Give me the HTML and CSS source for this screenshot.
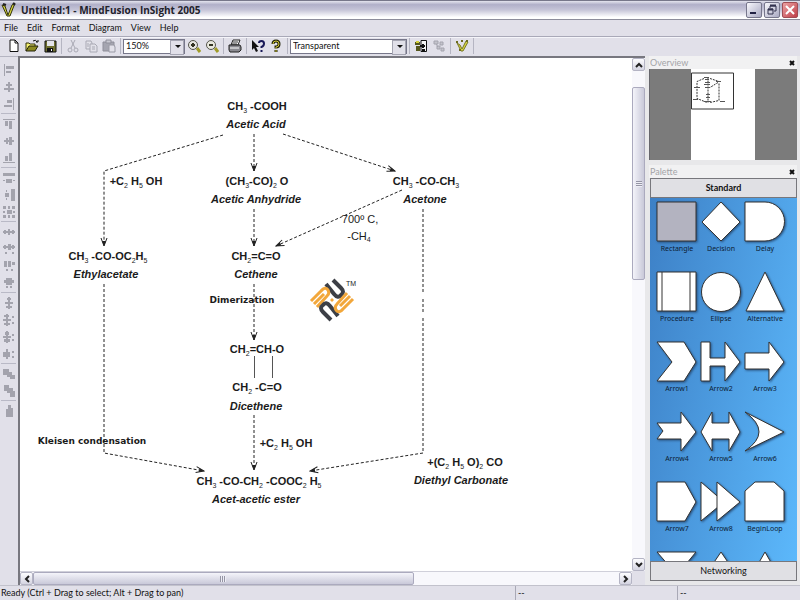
FILE: index.html
```html
<!DOCTYPE html>
<html lang="en">
<head>
<meta charset="utf-8">
<title>Untitled:1 - MindFusion InSight 2005</title>
<link rel="stylesheet" href="styles.css">
</head>
<body>
<header class="titlebar">
  <svg class="app-icon" viewBox="0 0 16 16" width="16" height="16" aria-hidden="true"><path d="M1 3l3 1 3 9 4-10 3-2-5 13H6z" fill="#d8d63c" stroke="#33330c"/><path d="M2 2l3 1" stroke="#222" stroke-width="2"/><path d="M12 1l2 2" stroke="#222" stroke-width="2"/></svg>
  <h1 class="title">Untitled:1 - MindFusion InSight 2005</h1>
  <button class="win-btn" aria-label="Minimize"><svg viewBox="0 0 14 14" width="14" height="14"><path d="M3 10h6" stroke="#222244" stroke-width="2"/></svg></button>
  <button class="win-btn" aria-label="Restore"><svg viewBox="0 0 14 14" width="14" height="14" fill="none" stroke="#33334f"><path d="M5 5V3h6v5H9"/><path d="M5 2.500h6M3 6.500h5" stroke-width="2"/><path d="M3 6h5v5H3z"/></svg></button>
  <button class="win-btn close" aria-label="Close"><svg viewBox="0 0 14 14" width="14" height="14"><path d="M3 3l8 8M11 3l-8 8" stroke="#fff" stroke-width="2"/></svg></button>
</header>
<nav class="menubar">
  <button>File</button><button>Edit</button><button>Format</button><button>Diagram</button><button>View</button><button>Help</button>
</nav>
<div class="toolbar">
  <button aria-label="New"><svg viewBox="0 0 14 14"><path d="M3 1h5l3 3v8.500H3z" fill="#fff" stroke="#111"/><path d="M8 1v3h3" fill="none" stroke="#111"/></svg></button>
  <button aria-label="Open"><svg viewBox="0 0 14 14"><path d="M1 12V4h3l1 1h5v2" fill="#f3ef70" stroke="#33330c"/><path d="M1 12l3-5h9l-3 5z" fill="#8c8a20" stroke="#22220a"/><path d="M8 2q3-2 4 1m1-2v2h-2" fill="none" stroke="#111"/></svg></button>
  <button aria-label="Save"><svg viewBox="0 0 14 14"><path d="M2 2h11v11H2z" fill="#6f7030" stroke="#111"/><path d="M4 2h7v5H4z" fill="#e4e4ea"/><path d="M4 9h6v4H4z" fill="#111"/><path d="M8 10h1v2H8z" fill="#fff"/></svg></button>
  <i class="sep"></i>
  <button aria-label="Cut" disabled><svg viewBox="0 0 14 14" fill="none" stroke="#a9a9b4"><path d="M5 1l4 8M9 1L5 9"/><circle cx="4" cy="11" r="2"/><circle cx="10" cy="11" r="2"/></svg></button>
  <button aria-label="Copy" disabled><svg viewBox="0 0 14 14" fill="#e2e1e9" stroke="#a9a9b4"><path d="M2 2h5l1 2v6H2z"/><path d="M6 5h5l2 2v6H6zM8 8h3M8 10h3M3 5h2M3 7h2"/></svg></button>
  <button aria-label="Paste" disabled><svg viewBox="0 0 14 14"><path d="M1 3h11v9H1z" fill="#a5a5b0" stroke="#8f8f9a"/><path d="M4 1h5v3H4z" fill="#c9c9d2" stroke="#8f8f9a"/><path d="M7 6h5l1 2v5H7z" fill="#e2e1e9" stroke="#9a9aa5"/></svg></button>
  <i class="sep"></i>
  <span class="combo zoom"><select aria-label="Zoom"><option>150%</option></select></span>
  <button aria-label="Zoom in"><svg viewBox="0 0 14 14"><path d="M10 9l3 4" stroke="#a09c28" stroke-width="3"/><circle cx="6" cy="6" r="4.500" fill="#e6e6e0" stroke="#55554c"/><path d="M4 6h4M6 4v4" stroke="#333322" stroke-width="2"/></svg></button>
  <button aria-label="Zoom out"><svg viewBox="0 0 14 14"><path d="M10 9l3 4" stroke="#a09c28" stroke-width="3"/><circle cx="6" cy="6" r="4.500" fill="#e9e9df" stroke="#55554c"/><path d="M4 6h4" stroke="#333322" stroke-width="2"/></svg></button>
  <i class="sep"></i>
  <button aria-label="Print"><svg viewBox="0 0 14 14"><path d="M5 1h7l-2 5H3z" fill="#fff" stroke="#222"/><path d="M5 3h5M4 5h5" stroke="#333"/><path d="M1 6h11l1 2v3l-2 2H2l-1-2z" fill="#8a8a90" stroke="#222"/><path d="M2 9h9" stroke="#fff"/></svg></button>
  <i class="sep"></i>
  <button aria-label="Context help"><svg viewBox="0 0 14 14"><path d="M1 1v10l2-2 2 4 2-1-2-4h3z" fill="#111"/><path d="M8 4q0-2 2.500-2T13 4.500 10.500 8v1M10.500 11v2" fill="none" stroke="#191958" stroke-width="2"/></svg></button>
  <button aria-label="Help"><svg viewBox="0 0 14 14"><path d="M4 5q0-3 3-3t3 3-3 3v1.500M7 11v2" fill="none" stroke="#222208" stroke-width="3"/><path d="M4 5q0-3 3-3t3 3-3 3v1.500M7 11v2" fill="none" stroke="#cfc73a" stroke-width="1"/></svg></button>
  <i class="sep"></i>
  <span class="combo style"><select aria-label="Style"><option>Transparent</option></select></span>
  <i class="sep"></i>
  <button aria-label="Insert node"><svg viewBox="0 0 14 14"><path d="M7 1.500h5.500v11H7z" fill="#f4f4f4" stroke="#111"/><path d="M1 3h5v3H1zM2 7h4v5H2z" fill="#55561c"/><path d="M2 2h3v2H2z" fill="#d3cf3a"/><path d="M6 7h5M9 5v4M8 11h3" stroke="#111" stroke-width="2"/></svg></button>
  <button aria-label="Connect" disabled><svg viewBox="0 0 14 14" fill="#c4c4cc" stroke="#a4a4ae"><path d="M2 2h4v3H2zM8 3h3v3H8zM5 7h3v3H5zM9 9h3v3H9zM4 5l2 3"/></svg></button>
  <i class="sep"></i>
  <button aria-label="About"><svg viewBox="0 0 14 14"><path d="M2 4l3 2 2 4 4-8 2 1-5 9H6z" fill="#d8d540" stroke="#77772a"/><path d="M1 3h2M6 2h2M11 2h2M4 11h2" stroke="#6c6c20" stroke-width="2"/></svg></button>
  <i class="sep"></i>
</div>
<main class="workspace">
  <aside class="align-bar">
    <button aria-label="Align left"><svg viewBox="0 0 12 12"><path d="M1 0h1v12H1zM3 2h8v3H3zM3 7h5v2H3z"/></svg></button>
    <button aria-label="Align center"><svg viewBox="0 0 12 12"><path d="M5 1h2v10H5zM3 3h6v2H3zM1 7h10v2H1z"/></svg></button>
    <button aria-label="Align right"><svg viewBox="0 0 12 12"><path d="M10 0h1v12h-1zM4 2h5v3H4zM1 7h8v2H1z"/></svg></button>
    <i class="rule"></i>
    <button aria-label="Align top"><svg viewBox="0 0 12 12"><path d="M0 1h12v1H0zM2 3h3v5H2zM6 3h3v8H6z"/></svg></button>
    <button aria-label="Align middle"><svg viewBox="0 0 12 12"><path d="M1 5h10v2H1zM3 3h2v6H3zM6 2h3v8H6z"/></svg></button>
    <button aria-label="Align bottom"><svg viewBox="0 0 12 12"><path d="M0 10h12v1H0zM2 4h3v5H2zM6 1h3v8H6z"/></svg></button>
    <i class="rule"></i>
    <button aria-label="Same width"><svg viewBox="0 0 12 12"><path d="M0 1h12v3H0zM0 8h2v1H0zM3 7h6v4H3zM10 8h2v1h-2z"/></svg></button>
    <button aria-label="Same height"><svg viewBox="0 0 12 12"><path d="M8 0h4v12H8zM2 4h4v4H2zM3 1h1v2H3zM3 9h1v2H3z"/></svg></button>
    <button aria-label="Same size"><svg viewBox="0 0 12 12"><path d="M0 0h3v3H0zM5 0h2v3H5zM9 0h3v3H9zM4 4h5v4H4zM0 5h2v2H0zM10 5h2v2h-2zM0 9h3v3H0zM5 9h2v3H5zM9 9h3v3H9z"/></svg></button>
    <i class="rule"></i>
    <button aria-label="Space across"><svg viewBox="0 0 12 12"><path d="M0 5h12v2H0zM1 4h2v4H1zM5 3h2v6H5zM9 4h2v4H9z"/></svg></button>
    <button aria-label="Increase across"><svg viewBox="0 0 12 12"><path d="M0 3h12v2H0zM1 2h2v4H1zM5 1h3v6H5zM9 2h2v4H9zM2 9h2v2H2zM9 9h2v2H9z"/></svg></button>
    <button aria-label="Decrease across"><svg viewBox="0 0 12 12"><path d="M1 1h3v6H1zM5 1h3v6H5zM9 2h3v3H9zM3 9h2v2H3zM8 9h2v2H8z"/></svg></button>
    <button aria-label="Remove across"><svg viewBox="0 0 12 12"><path d="M1 3h10v3H1zM3 1h6v7H3zM3 9h2v2H3zM7 9h2v2H7z"/></svg></button>
    <i class="rule"></i>
    <button aria-label="Space down"><svg viewBox="0 0 12 12"><path d="M5 0h2v12H5zM4 1h4v2H4zM2 5h8v2H2zM3 9h6v2H3z"/></svg></button>
    <button aria-label="Increase down"><svg viewBox="0 0 12 12"><path d="M3 0h2v12H3zM1 1h5v2H1zM0 5h8v2H0zM1 9h6v2H1zM9 2h2v2H9zM9 8h2v2H9z"/></svg></button>
    <button aria-label="Decrease down"><svg viewBox="0 0 12 12"><path d="M3 0h2v12H3zM2 1h4v3H2zM0 5h8v2H0zM1 8h6v3H1zM9 3h2v2H9zM9 8h2v2H9z"/></svg></button>
    <button aria-label="Remove down"><svg viewBox="0 0 12 12"><path d="M3 1h2v10H3zM0 4h7v5H0zM9 3h2v2H9zM9 8h2v2H9z"/></svg></button>
    <i class="rule"></i>
    <button aria-label="Bring to front"><svg viewBox="0 0 12 12"><path d="M0 1h6v6H0zM4 4h5v5H4zM7 7h5v4H7z"/></svg></button>
    <button aria-label="Send to back"><svg viewBox="0 0 12 12"><path d="M1 0h5v6H1zM4 3h6v5H4zM7 6h5v6H7z"/></svg></button>
    <i class="rule"></i>
    <button aria-label="Lock"><svg viewBox="0 0 12 12"><path d="M5 0h3v3h2v9H3V4h2z"/></svg></button>
  </aside>
  <section class="document">
    <div class="canvas">
      <svg class="diagram" viewBox="20 58 612 513" width="612" height="513">
        <defs>
          <marker id="tip" viewBox="0 0 10 8" refX="9" refY="4" markerWidth="10" markerHeight="8" markerUnits="userSpaceOnUse" orient="auto"><path d="M1 1l8 3-8 3" fill="none" stroke="#222"/><path d="M4 2l5 2-5 2z" fill="#222"/></marker>
        </defs>
        <g class="links">
          <path d="M223 135L104 171V246"/>
          <path d="M254 134V171"/>
          <path d="M283 134L395 171"/>
          <path d="M402 190L276 246"/>
          <path d="M254 209V246"/>
          <path d="M254 284V340"/>
          <path d="M254 415V470"/>
          <path d="M104 284V453L204 471"/>
          <path d="M423 209V294M423 299V314M423 318V453L310 471"/>
        </g>
        <path class="bond" d="M254 356V378M272 356V378"/>
        <g class="formula">
          <text x="257" y="110">CH<tspan class="sub" dy="3">3</tspan><tspan dy="-3"> -COOH</tspan></text>
          <text x="257" y="185">(CH<tspan class="sub" dy="3">3</tspan><tspan dy="-3">-CO)</tspan><tspan class="sub" dy="3">2</tspan><tspan dy="-3"> O</tspan></text>
          <text x="426" y="185">CH<tspan class="sub" dy="3">3</tspan><tspan dy="-3"> -CO-CH</tspan><tspan class="sub" dy="3">3</tspan></text>
          <text x="136" y="185">+C<tspan class="sub" dy="3">2</tspan><tspan dy="-3"> H</tspan><tspan class="sub" dy="3">5</tspan><tspan dy="-3"> OH</tspan></text>
          <text x="108" y="260">CH<tspan class="sub" dy="3">3</tspan><tspan dy="-3"> -CO-OC</tspan><tspan class="sub" dy="3">2</tspan><tspan dy="-3">H</tspan><tspan class="sub" dy="3">5</tspan></text>
          <text x="256" y="260">CH<tspan class="sub" dy="3">2</tspan><tspan dy="-3">=C=O</tspan></text>
          <text x="257" y="353">CH<tspan class="sub" dy="3">2</tspan><tspan dy="-3">=CH-O</tspan></text>
          <text x="257" y="391">CH<tspan class="sub" dy="3">2</tspan><tspan dy="-3"> -C=O</tspan></text>
          <text x="286" y="447">+C<tspan class="sub" dy="3">2</tspan><tspan dy="-3"> H</tspan><tspan class="sub" dy="3">5</tspan><tspan dy="-3"> OH</tspan></text>
          <text x="259" y="485">CH<tspan class="sub" dy="3">3</tspan><tspan dy="-3"> -CO-CH</tspan><tspan class="sub" dy="3">2</tspan><tspan dy="-3"> -COOC</tspan><tspan class="sub" dy="3">2</tspan><tspan dy="-3"> H</tspan><tspan class="sub" dy="3">5</tspan></text>
          <text x="465" y="466">+(C<tspan class="sub" dy="3">2</tspan><tspan dy="-3"> H</tspan><tspan class="sub" dy="3">5</tspan><tspan dy="-3"> O)</tspan><tspan class="sub" dy="3">2</tspan><tspan dy="-3"> CO</tspan></text>
        </g>
        <g class="name">
          <text x="256" y="128">Acetic Acid</text>
          <text x="256" y="203">Acetic Anhydride</text>
          <text x="425" y="203">Acetone</text>
          <text x="106" y="278">Ethylacetate</text>
          <text x="256" y="278">Cethene</text>
          <text x="256" y="410">Dicethene</text>
          <text x="256" y="503">Acet-acetic ester</text>
          <text x="461" y="484">Diethyl Carbonate</text>
        </g>
        <g class="note">
          <text x="242" y="303">Dimerization</text>
          <text x="92" y="444">Kleisen condensation</text>
        </g>
        <g class="cond">
          <text x="360" y="223">700º C,</text>
          <text x="359" y="240">-CH<tspan class="sub" dy="2">4</tspan></text>
        </g>
        <g fill="none">
          <g id="half">
            <path d="M326 284L334 294Q338 299 341 295Q345 292 341 288L333 280" stroke="#3c3f46" stroke-width="4"/>
            <path d="M311 301L321 291Q325 286 328 290Q330 293 327 296L317 307M314 304L324 294" stroke="#f2a73b" stroke-width="3"/>
          </g>
          <use href="#half" transform="rotate(180 332 300)"/>
          <path d="M332 298l2 2-2 2-2-2z" fill="#f2a73b"/>
        </g>
        <text class="tm" x="346" y="286">TM</text>
      </svg>
    </div>
    <div class="vscroll">
      <button class="arrow" aria-label="Scroll up"><svg viewBox="0 0 8 8"><path d="M1 6l3-3 3 3"/></svg></button>
      <div class="track"><div class="thumb"></div></div>
      <button class="arrow" aria-label="Scroll down"><svg viewBox="0 0 8 8"><path d="M1 2l3 3 3-3"/></svg></button>
    </div>
    <div class="hscroll">
      <button class="arrow" aria-label="Scroll left"><svg viewBox="0 0 8 8"><path d="M6 1L3 4l3 3"/></svg></button>
      <div class="track"><div class="thumb"></div></div>
      <button class="arrow" aria-label="Scroll right"><svg viewBox="0 0 8 8"><path d="M2 1l3 3-3 3"/></svg></button>
    </div>
  </section>
  <aside class="panels">
    <section class="overview">
      <header class="panel-head"><h2>Overview</h2><button aria-label="Close overview"><svg viewBox="0 0 6 6"><path d="M1 1l4 4M5 1L1 5"/></svg></button></header>
      <div class="map">
        <svg class="page" viewBox="0 0 64 90" width="64" height="90">
          <path d="M0.500 3.500h42v36h-42z" fill="none" stroke="#333"/>
          <g fill="none" stroke="#333" stroke-dasharray="2 1"><path d="M13 9L6 12v17l10 4M19 9l9 3M17 8v25M28 14v17l-9 2M27 13l-8 5"/></g>
          <path d="M13 8h5M14 10h4M14 13h5M13 15h6M3 18h6M14 18h5M15 25h4M15 28h4M25 12h5M13 32h7M2 30h5M29 32h5" stroke="#555"/>
        </svg>
      </div>
    </section>
    <section class="palette">
      <header class="panel-head"><h2>Palette</h2><button aria-label="Close palette"><svg viewBox="0 0 6 6"><path d="M1 1l4 4M5 1L1 5"/></svg></button></header>
      <div class="palette-box">
        <button class="group open">Standard</button>
        <div class="shapes">
          <figure><svg viewBox="0 0 42 42"><path class="picked" d="M1 1h39v39H1z"/></svg><figcaption>Rectangle</figcaption></figure>
          <figure><svg viewBox="0 0 42 42"><path d="M21 1l19 20-19 19L2 21z"/></svg><figcaption>Decision</figcaption></figure>
          <figure><svg viewBox="0 0 42 42"><path d="M1 1h20a19 19 0 0 1 0 39H1z"/></svg><figcaption>Delay</figcaption></figure>
          <figure><svg viewBox="0 0 42 42"><path d="M1 1h39v39H1zM6 1v39M34 1v39"/></svg><figcaption>Procedure</figcaption></figure>
          <figure><svg viewBox="0 0 42 42"><circle cx="21" cy="21" r="19.500"/></svg><figcaption>Ellipse</figcaption></figure>
          <figure><svg viewBox="0 0 42 42"><path d="M21 1l19 39H2z"/></svg><figcaption>Alternative</figcaption></figure>
          <figure><svg viewBox="0 0 42 42"><path d="M1 1h27l12 20-12 19H1l15-19z"/></svg><figcaption>Arrow1</figcaption></figure>
          <figure><svg viewBox="0 0 42 42"><path d="M1 1h9v16h15V1l15 20-15 19V25H10v15H1z"/></svg><figcaption>Arrow2</figcaption></figure>
          <figure><svg viewBox="0 0 42 42"><path d="M1 12h24V1l15 20-15 19V28H1z"/></svg><figcaption>Arrow3</figcaption></figure>
          <figure><svg viewBox="0 0 42 42"><path d="M1 12h24V1l15 20-15 19V28H1l6-8z"/></svg><figcaption>Arrow4</figcaption></figure>
          <figure><svg viewBox="0 0 42 42"><path d="M1 21L12 1v11h17V1l11 20-11 19V28H12v12z"/></svg><figcaption>Arrow5</figcaption></figure>
          <figure><svg viewBox="0 0 42 42"><path d="M1 1l39 20L1 40q28-19 0-39z"/></svg><figcaption>Arrow6</figcaption></figure>
          <figure><svg viewBox="0 0 42 42"><path d="M1 1h28l11 20-11 19H1z"/></svg><figcaption>Arrow7</figcaption></figure>
          <figure><svg viewBox="0 0 42 42"><path d="M1 1l23 20L1 40z"/><path d="M17 1l23 20-23 19z"/></svg><figcaption>Arrow8</figcaption></figure>
          <figure><svg viewBox="0 0 42 42"><path d="M11 1h19l10 9v30H1V10z"/></svg><figcaption>BeginLoop</figcaption></figure>
          <figure><svg viewBox="0 0 42 42"><path d="M1 1h39L21 24z"/></svg></figure>
          <figure><svg viewBox="0 0 42 42"><path d="M21 1l19 28H2z"/></svg></figure>
          <figure><svg viewBox="0 0 42 42"><path d="M21 1l16 28H5z"/></svg></figure>
        </div>
        <button class="group">Networking</button>
      </div>
    </section>
  </aside>
</main>
<footer class="status">
  <span>Ready (Ctrl + Drag to select; Alt + Drag to pan)</span><span>--</span><span>--</span>
</footer>
</body>
</html>
```
FILE: styles.css
```css
* { box-sizing: border-box; }
body {
  margin: 0;
  height: 100vh;
  display: flex;
  flex-direction: column;
  overflow: hidden;
  background: #e1e0e9;
  color: #111;
  font: 9px/12px Lato, sans-serif;
}
button {
  display: flex;
  align-items: center;
  justify-content: center;
  padding: 0;
  border: 0;
  background: none;
  color: inherit;
  font: inherit;
}
h1, h2, figure { margin: 0; }

.titlebar {
  display: flex;
  align-items: center;
  gap: 2px;
  height: 20px;
  padding: 0 2px 0 1px;
  border-top: 1px solid #77778a;
  border-bottom: 1px solid #8d8d9c;
  background: linear-gradient(#e4e4ee, #b1b0c9 20%, #c6c5d8 50%, #ffffff 90%);
}
.title {
  flex: 1;
  padding-left: 2px;
  font: bold 10px/16px "Open Sans", sans-serif;
  color: #22222c;
}
.win-btn {
  width: 16px;
  height: 16px;
  border: 1px solid #77778c;
  border-radius: 2px;
  background: linear-gradient(135deg, #f7f7fc, #a9a9c2);
}
.win-btn.close {
  border-color: #a04c54;
  background: linear-gradient(135deg, #eba0a2, #bf3f49);
}

.menubar {
  display: flex;
  gap: 9px;
  height: 17px;
  padding-left: 4px;
  border-bottom: 1px solid #a9a9b8;
}
.toolbar {
  display: flex;
  align-items: center;
  height: 19px;
  padding: 0 0 2px 5px;
  border-top: 1px solid #f5f5fa;
}
.toolbar button { width: 18px; height: 16px; }
.toolbar svg { width: 14px; height: 14px; }
.sep {
  width: 1px;
  height: 16px;
  margin: 0 2px;
  background: #b5b5c2;
}
.combo {
  display: flex;
  position: relative;
  height: 15px;
  border: 1px solid #77778a;
  background: #fff;
}
.combo.zoom { width: 62px; }
.combo.style { width: 117px; }
.combo select {
  appearance: none;
  flex: 1;
  padding: 0 2px;
  border: 0;
  background: none;
  color: #111;
  font: inherit;
}
.combo::before {
  content: "";
  position: absolute;
  top: 0;
  right: 0;
  width: 12px;
  height: 13px;
  border: 1px solid #a5a5b2;
  background: #e1e0e9;
}
.combo::after {
  content: "";
  position: absolute;
  top: 5px;
  right: 3px;
  border: 3px solid transparent;
  border-top-color: #111;
}

.workspace {
  flex: 1;
  min-height: 0;
  display: flex;
}
.align-bar {
  width: 18px;
  padding: 4px 2px 0 1px;
  border-top: 1px solid #b5b5c2;
}
.align-bar button { width: 15px; height: 17px; }
.align-bar svg { width: 12px; height: 12px; fill: #a3a3ad; }
.rule {
  display: block;
  height: 1px;
  margin: 1px 0;
  background: #b9b9c6;
}

.document {
  flex: 1;
  min-width: 0;
  display: grid;
  grid-template: minmax(0, 1fr) 14px / minmax(0, 1fr) 13px;
  border-top: 2px solid #77777f;
  border-left: 2px solid #77777f;
}
.canvas { overflow: hidden; background: #fff; }
.diagram { display: block; }
.links path {
  fill: none;
  stroke: #222;
  stroke-dasharray: 3 2;
  marker-end: url(#tip);
}
.bond { stroke: #555; shape-rendering: crispEdges; }
.diagram text { fill: #1b1b1b; text-anchor: middle; }
.diagram .formula text { font: bold 11px "Liberation Sans", sans-serif; }
.diagram .name text { font: italic bold 11px "Liberation Sans", sans-serif; }
.diagram .note text { font: bold 9px "DejaVu Sans", sans-serif; }
.diagram .cond text { font: 11px "Liberation Sans", sans-serif; }
.diagram .sub { font-size: 7px; font-weight: normal; }
.diagram .tm { font: 7px "Liberation Sans", sans-serif; text-anchor: start; }

.vscroll, .hscroll { display: flex; background: #f8f8fc; }
.vscroll { flex-direction: column; }
.hscroll { border-top: 1px solid #d0d0da; }
.arrow {
  width: 13px;
  height: 13px;
  border: 1px solid #b4b4c4;
  border-radius: 2px;
  background: linear-gradient(#fdfdff, #d4d4e1);
}
.arrow svg { width: 8px; height: 8px; fill: none; stroke: #222; stroke-width: 2; }
.track { flex: 1; display: flex; min-width: 0; min-height: 0; }
.vscroll .track { flex-direction: column; padding-top: 16px; }
.thumb {
  display: flex;
  align-items: center;
  justify-content: center;
  border: 1px solid #abaabe;
  border-radius: 2px;
}
.vscroll .thumb { height: 41%; background: linear-gradient(90deg, #f4f4fa, #c9c9d9); }
.hscroll .thumb { width: 65%; background: linear-gradient(#f4f4fa, #c9c9d9); }
.thumb::after { content: ""; width: 6px; height: 6px; }
.vscroll .thumb::after { background: repeating-linear-gradient(#9595a5 0 1px, #eeeef5 1px 2px); }
.hscroll .thumb::after { background: repeating-linear-gradient(90deg, #9595a5 0 1px, #eeeef5 1px 2px); }

.panels {
  width: 155px;
  display: flex;
  flex-direction: column;
  gap: 5px;
  padding: 0 3px 4px 4px;
  background: #e8e8ea;
}
.palette { flex: 1; min-height: 0; display: flex; flex-direction: column; }
.panel-head {
  display: flex;
  align-items: center;
  justify-content: space-between;
  height: 13px;
  padding: 0 2px 0 1px;
  background: #f1f1f2;
}
.panel-head h2 { font-size: 9px; font-weight: normal; color: #a4a4a8; }
.panel-head svg { width: 6px; height: 6px; stroke: #111; stroke-width: 2; }
.map {
  display: flex;
  height: 91px;
  padding-left: 41px;
  border-left: 1px solid #66666c;
  background: #7b7b7b;
}
.page { background: #fff; height: 91px; }
.palette-box {
  flex: 1;
  min-height: 0;
  display: flex;
  flex-direction: column;
  margin-left: 1px;
}
.group {
  flex: none;
  height: 20px;
  border: 1px solid #77777c;
  background: #e0e0e4;
}
.group.open { font-weight: bold; }
.shapes {
  flex: 1;
  min-height: 0;
  overflow: hidden;
  display: grid;
  grid-template-columns: repeat(3, 44px);
  grid-auto-rows: 70px;
  padding: 3px 0 0 5px;
  background: linear-gradient(100deg, #3d80c6, #5cb8fb);
}
.shapes figure { display: flex; flex-direction: column; align-items: center; }
.shapes svg {
  width: 42px;
  height: 42px;
  fill: #fff;
  stroke: #333;
  filter: drop-shadow(1px 1px 1px #28507c);
}
.shapes .picked { fill: #b3b3c0; }
.shapes figcaption { font: 7px/12px "Noto Sans", sans-serif; color: #0c1c34; }

.status {
  display: grid;
  grid-template-columns: 1fr 162px 123px;
  height: 15px;
  border-top: 1px solid #c2c2cc;
}
.status span { padding: 1px 0 0 2px; border-left: 1px solid #a9a9b6; }
.status span:first-child { padding-left: 1px; border-left: 0; }
```
